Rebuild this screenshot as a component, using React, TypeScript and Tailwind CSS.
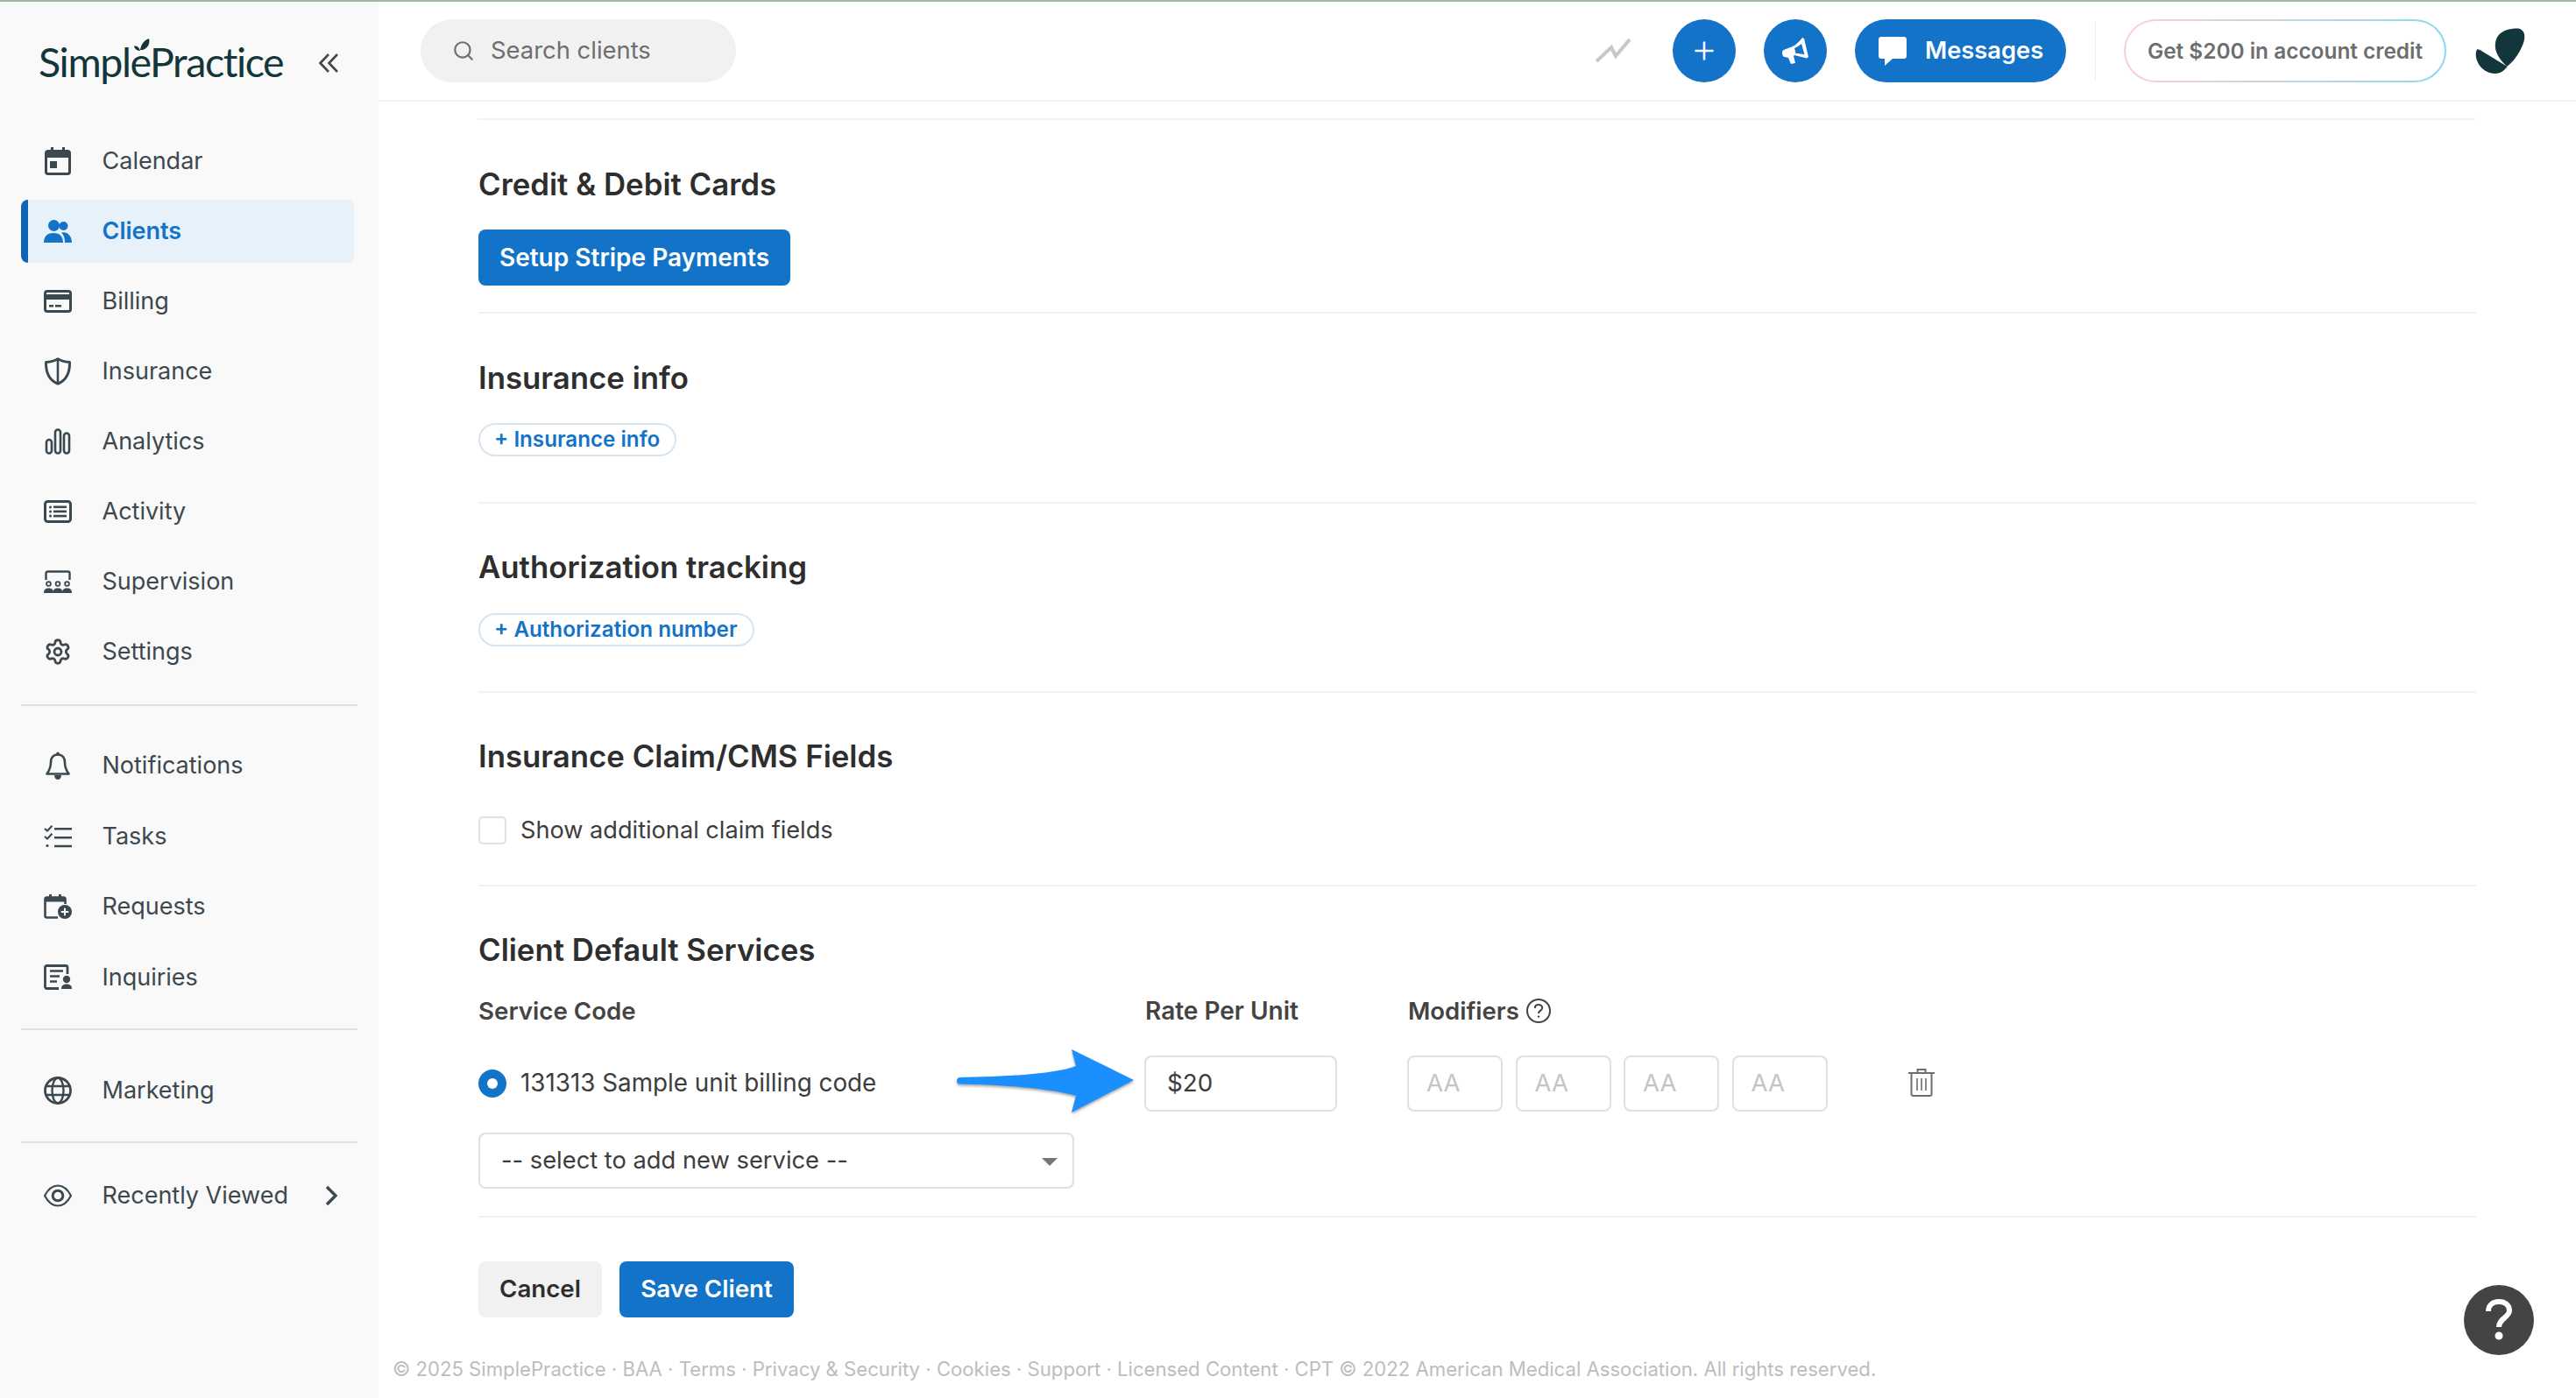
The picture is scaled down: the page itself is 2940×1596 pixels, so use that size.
import React from "react";
import { Settings, Search } from "lucide-react";

const Ink = "#3c4850";

function CalendarIco() {
  return (
    <svg width="32" height="32" viewBox="0 0 32 32" fill="none">
      <rect x="2.5" y="4.5" width="27" height="26" rx="2.5" stroke="currentColor" strokeWidth="3" />
      <rect x="2" y="4" width="28" height="8" fill="currentColor" />
      <rect x="8" y="0" width="3" height="6" fill="currentColor" />
      <rect x="21" y="0" width="3" height="6" fill="currentColor" />
      <rect x="7" y="16" width="8" height="8" fill="currentColor" />
    </svg>
  );
}
function ClientsIco() {
  return (
    <svg width="32" height="26" viewBox="0 0 32 26" fill="currentColor">
      <circle cx="11.5" cy="6.5" r="6.5" />
      <circle cx="22.5" cy="7" r="5" />
      <path d="M0 26C0 18 5 15 11 15C17 15 22 18 22 26Z" />
      <path d="M20 14.5C26.5 13 32 18 32 26H24C24 21 23 17.5 20 14.5Z" />
    </svg>
  );
}
function BillingIco() {
  return (
    <svg width="32" height="26" viewBox="0 0 32 26" fill="none">
      <rect x="1.5" y="1.5" width="29" height="23" rx="2.5" stroke="currentColor" strokeWidth="3" />
      <rect x="1" y="5" width="30" height="6" fill="currentColor" />
      <rect x="6" y="17" width="5" height="2.5" fill="currentColor" />
      <rect x="13" y="17" width="7" height="2.5" fill="currentColor" />
    </svg>
  );
}
function ShieldIco() {
  return (
    <svg width="32" height="32" viewBox="0 0 32 32" fill="none" stroke="currentColor" strokeWidth="3">
      <path d="M16 1.8C20 4.2 25 5.4 29.5 5.6C29.8 17 26 26 16 30.2C6 26 2.2 17 2.5 5.6C7 5.4 12 4.2 16 1.8Z" strokeLinejoin="round" />
      <path d="M16 2V30" strokeWidth="2.6" />
    </svg>
  );
}
function AnalyticsIco() {
  return (
    <svg width="30" height="30" viewBox="0 0 30 30" fill="none" stroke="currentColor" strokeWidth="2.6">
      <rect x="2" y="13" width="6" height="15.5" rx="3" />
      <rect x="12" y="1.5" width="6" height="27" rx="3" />
      <rect x="22" y="5.5" width="6" height="23" rx="3" />
    </svg>
  );
}
function ActivityIco() {
  return (
    <svg width="32" height="26" viewBox="0 0 32 26" fill="none">
      <rect x="1.5" y="1.5" width="29" height="23" rx="3" stroke="currentColor" strokeWidth="3" />
      <g fill="currentColor">
        <rect x="6" y="6.5" width="3" height="3" rx="1.5" />
        <rect x="6" y="11.5" width="3" height="3" rx="1.5" />
        <rect x="6" y="16.5" width="3" height="3" rx="1.5" />
        <rect x="11" y="6.5" width="15" height="2.6" />
        <rect x="11" y="11.6" width="15" height="2.6" />
        <rect x="11" y="16.8" width="15" height="2.6" />
      </g>
    </svg>
  );
}
function SupervisionIco() {
  return (
    <svg width="32" height="26" viewBox="0 0 32 26" fill="none">
      <path d="M2.5 11V3.5C2.5 2.4 3.4 1.5 4.5 1.5H27.5C28.6 1.5 29.5 2.4 29.5 3.5V11" stroke="currentColor" strokeWidth="2.4" />
      <g fill="none" stroke="currentColor" strokeWidth="1.8">
        <circle cx="5.5" cy="15.5" r="2.4" />
        <circle cx="16" cy="15.5" r="2.4" />
        <circle cx="26.5" cy="15.5" r="2.4" />
      </g>
      <g fill="currentColor">
        <path d="M0 26C0 22 2 20.4 5.5 20.4C9 20.4 11 22 11 26Z" />
        <path d="M10.5 26C10.5 22 12.5 20.4 16 20.4C19.5 20.4 21.5 22 21.5 26Z" />
        <path d="M21 26C21 22 23 20.4 26.5 20.4C30 20.4 32 22 32 26Z" />
      </g>
    </svg>
  );
}
function BellIco() {
  return (
    <svg width="28" height="32" viewBox="0 0 28 32" fill="none">
      <path d="M14 3.5C8 3.5 6 8 6 12.5C6 18.5 4 22 1.5 25.5H26.5C24 22 22 18.5 22 12.5C22 8 20 3.5 14 3.5Z" stroke="currentColor" strokeWidth="2.6" strokeLinejoin="round" />
      <circle cx="14" cy="2.4" r="1.8" fill="currentColor" />
      <path d="M10 27H18C18 30 16 32 14 32C12 32 10 30 10 27Z" fill="currentColor" />
    </svg>
  );
}
function TasksIco() {
  return (
    <svg width="32" height="26" viewBox="0 0 32 26" fill="none" stroke="currentColor">
      <path d="M1 4L4 6.5L9.5 0.8" strokeWidth="2.2" />
      <path d="M1 13L4 15.5L9.5 9.8" strokeWidth="2.2" />
      <circle cx="4" cy="23.5" r="1.6" fill="currentColor" stroke="none" />
      <path d="M12 4.3H32M12 14.3H32M12 24H32" strokeWidth="2.6" />
    </svg>
  );
}
function RequestsIco() {
  return (
    <svg width="32" height="28" viewBox="0 0 32 28" fill="none">
      <path d="M16 26.5H3.5C2.4 26.5 1.5 25.6 1.5 24.5V5.5C1.5 4.4 2.4 3.5 3.5 3.5H22.5C23.6 3.5 24.5 4.4 24.5 5.5V11" stroke="currentColor" strokeWidth="2.6" />
      <rect x="1" y="3.5" width="24" height="5" fill="currentColor" />
      <rect x="6" y="0" width="3" height="5" fill="currentColor" />
      <rect x="17" y="0" width="3" height="5" fill="currentColor" />
      <circle cx="24" cy="20" r="8" fill="currentColor" />
      <path d="M24 15.8V24.2M19.8 20H28.2" stroke="#f9f9f9" strokeWidth="2" />
    </svg>
  );
}
function InquiriesIco() {
  return (
    <svg width="32" height="30" viewBox="0 0 32 30" fill="none">
      <path d="M17 27.5H3.5C2.4 27.5 1.5 26.6 1.5 25.5V3.5C1.5 2.4 2.4 1.5 3.5 1.5H25C26.1 1.5 27 2.4 27 3.5V11" stroke="currentColor" strokeWidth="2.8" />
      <path d="M7 7.5H22M7 13.5H18M7 19.5H15" stroke="currentColor" strokeWidth="2.6" />
      <circle cx="26" cy="17" r="4.2" fill="currentColor" />
      <path d="M20 28C20 24 22.5 22.6 26 22.6C29.5 22.6 32 24 32 28Z" fill="currentColor" />
    </svg>
  );
}
function GlobeIco() {
  return (
    <svg width="32" height="32" viewBox="0 0 32 32" fill="none" stroke="currentColor" strokeWidth="2.4">
      <circle cx="16" cy="16" r="14.5" strokeWidth="2.8" />
      <ellipse cx="16" cy="16" rx="6.5" ry="14.5" />
      <path d="M2.5 11H29.5M2.5 21H29.5" />
    </svg>
  );
}
function EyeIco() {
  return (
    <svg width="32" height="26" viewBox="0 0 32 26" fill="none" stroke="currentColor">
      <path d="M1 13C5 5.5 10 1.5 16 1.5C22 1.5 27 5.5 31 13C27 20.5 22 24.5 16 24.5C10 24.5 5 20.5 1 13Z" strokeWidth="2.2" strokeLinejoin="round" />
      <circle cx="16" cy="13" r="5.8" strokeWidth="3" />
    </svg>
  );
}

const groupA = [
  { label: "Calendar", icon: <CalendarIco /> },
  { label: "Clients", icon: <ClientsIco />, active: true },
  { label: "Billing", icon: <BillingIco /> },
  { label: "Insurance", icon: <ShieldIco /> },
  { label: "Analytics", icon: <AnalyticsIco /> },
  { label: "Activity", icon: <ActivityIco /> },
  { label: "Supervision", icon: <SupervisionIco /> },
  { label: "Settings", icon: <Settings size={36} strokeWidth={2.1} /> },
];
const groupB = [
  { label: "Notifications", icon: <BellIco /> },
  { label: "Tasks", icon: <TasksIco /> },
  { label: "Requests", icon: <RequestsIco /> },
  { label: "Inquiries", icon: <InquiriesIco /> },
];

function NavItem({ label, icon, active }: { label: string; icon: React.ReactNode; active?: boolean }) {
  return (
    <div
      className={
        active
          ? "flex h-[72px] w-[380px] items-center rounded-lg border-l-8 border-[#1064b4] bg-[#e7f1fa] pl-[18px] text-[#1373c9]"
          : "flex h-[72px] w-[380px] items-center rounded-lg pl-[26px] text-[#3c4850]"
      }
    >
      <span className="flex w-[32px] items-center justify-center">{icon}</span>
      <span className={active ? "ml-[34.5px] mt-[1px] text-[27px] font-semibold" : "ml-[34.5px] mt-[1px] text-[27px]"}>{label}</span>
    </div>
  );
}

function Sidebar() {
  return (
    <aside className="flex w-[432px] shrink-0 flex-col bg-[#f9f9f9] pl-[24px] pr-[24px]">
      <div className="flex h-[146px] items-start justify-between pr-[21px] pt-[42px]">
        <div className="relative ml-[20px] font-[Lato,sans-serif] text-[46.5px] leading-[52px] tracking-[-1.4px] text-[#12363a]">
          SimplePractice
          <svg className="absolute left-[108px] top-[-1px]" width="20" height="20" viewBox="0 0 20 20" fill="#12363a">
            <path d="M8 14C9 8 12 3 18 1C19.5 6 17 12 11 14Z" />
            <path d="M8 15C4 15 1.5 12.5 1 9.5C4.5 9 7 11 8 15Z" />
          </svg>
        </div>
        <svg className="mt-[16px]" width="24" height="24" viewBox="0 0 24 24" fill="none" stroke="#4a4545" strokeWidth="2.6">
          <path d="M12 2L2.5 12L12 22M22 2L12.5 12L22 22" />
        </svg>
      </div>
      <nav className="flex flex-col gap-2">
        {groupA.map((i) => (
          <NavItem key={i.label} {...i} />
        ))}
      </nav>
      <div className="mt-[24px] h-[2px] w-[384px] bg-[#e0e0e0]" />
      <div className="mt-[32px] flex flex-col gap-[8.6px]">
        {groupB.map((i) => (
          <NavItem key={i.label} {...i} />
        ))}
      </div>
      <div className="mt-[22px] h-[2px] w-[384px] bg-[#e0e0e0]" />
      <div className="mt-[33px]">
        <NavItem label="Marketing" icon={<GlobeIco />} />
      </div>
      <div className="mt-[22px] h-[2px] w-[384px] bg-[#e0e0e0]" />
      <div className="relative mt-[24px]">
        <NavItem label="Recently Viewed" icon={<EyeIco />} />
        <svg className="absolute left-[346px] top-[24px]" width="16" height="24" viewBox="0 0 16 24" fill="none" stroke={Ink} strokeWidth="3.4">
          <path d="M3 2L13 12L3 22" />
        </svg>
      </div>
    </aside>
  );
}

function Header() {
  return (
    <header className="flex h-[114px] shrink-0 items-center border-b-2 border-[#f2f2f2] pl-[48px] pr-[57px]">
      <div className="flex h-[72px] w-[360px] items-center rounded-full bg-[#f1f1f1] pl-[36px] text-[#6e6e6e]">
        <Search size={26} strokeWidth={2} color="#6e6e6e" />
        <span className="ml-[18px] text-[27.4px]">Search clients</span>
      </div>
      <div className="ml-auto flex items-center">
        <svg width="40" height="28" viewBox="0 0 40 28" fill="none" stroke="#c8c8c8" strokeWidth="4">
          <path d="M1 26L18 10L23 20L39 1" />
        </svg>
        <div className="ml-[48px] flex h-[72px] w-[72px] items-center justify-center rounded-full bg-[#1373c9]">
          <svg width="24" height="24" viewBox="0 0 24 24" stroke="#fff" strokeWidth="2.6">
            <path d="M12 1.5V22.5M1.5 12H22.5" />
          </svg>
        </div>
        <div className="ml-[32px] flex h-[72px] w-[72px] items-center justify-center rounded-full bg-[#1373c9]">
          <svg width="30" height="30" viewBox="0 0 30 30" fill="#fff">
            <path
              fillRule="evenodd"
              d="M23 0L25 1L30 22L28 23.5L14 20L13 21L15 29L10 30L7 23L3 22C1 22 0 20 0 17C0 15 1 14 3 13.5L12 10C16 8 20 4 23 0ZM22 7C19 9.5 16 11.5 14 12L15.5 18C19 18 23 18.5 25.5 19.5Z"
            />
          </svg>
        </div>
        <div className="ml-[32px] flex h-[72px] w-[241px] items-center rounded-full bg-[#1373c9] pl-[27px] text-white">
          <svg width="32" height="33" viewBox="0 0 32 33" fill="#fff">
            <path d="M3 0H29C30.7 0 32 1.3 32 3V22C32 23.7 30.7 25 29 25H16L7 33V25H3C1.3 25 0 23.7 0 22V3C0 1.3 1.3 0 3 0Z" />
          </svg>
          <span className="ml-[21px] text-[27.3px] font-semibold">Messages</span>
        </div>
        <div className="ml-[33px] h-[66px] w-[1px] bg-[#ececec]" />
        <div className="ml-[32px] h-[72px] w-[368px] rounded-full bg-gradient-to-r from-[#fbcfd0] to-[#86d8f0] p-[2px]">
          <div className="flex h-full w-full items-center justify-center rounded-full bg-white text-[24.4px] font-semibold text-[#6e6e6e]">
            Get $200 in account credit
          </div>
        </div>
        <svg className="ml-[33px]" width="58" height="52" viewBox="0 0 58 52" fill="#12363a">
          <path d="M48 0.5C39 0.5 30 3 26 9C22.5 14 22 21 24 27C26 33 31 39 36 44C42 40 48 32 52 24C55 18 57 13 56 7C55 3 52 0.5 48 0.5Z" />
          <path d="M2 24.5C3.5 24 5 25 7 26L36.5 44C33 49 28 52 23 52C14 52 5 46 2 37C0.5 33 0 28 2 24.5Z" />
        </svg>
      </div>
    </header>
  );
}

function Section({ title, top, children, className }: { title: string; top: string; children: React.ReactNode; className: string }) {
  return (
    <section className={"border-b-2 border-[#f2f2f2] " + top + " " + className}>
      <h2 className="text-[34.8px] font-semibold leading-[44px] text-[#2e2e2e]">{title}</h2>
      {children}
    </section>
  );
}

function AddPill({ label }: { label: string }) {
  return (
    <div className="inline-flex h-[38px] items-center rounded-full border-2 border-[#d6e4ef] pl-[16px] pr-[17px] text-[24.2px] font-semibold text-[#1373c9]">
      + {label}
    </div>
  );
}

function AaBox() {
  return (
    <div className="flex h-[64px] w-[109px] items-center rounded-lg border-2 border-[#e0e0e0] pl-[20px] text-[27.5px] text-[#c4c4c4]">AA</div>
  );
}

function Content() {
  return (
    <div className="min-h-0 flex-1 pl-[114px] pr-[114px] pt-[19px]">
      <div className="h-[2px] bg-[#f2f2f2]" />
      <Section title="Credit & Debit Cards" top="pt-[51px]" className="pb-[30px]">
        <div className="mt-[30px] flex h-[64px] w-[356px] items-center justify-center rounded-lg bg-[#1373c9] text-[28px] font-semibold text-white">
          Setup Stripe Payments
        </div>
      </Section>
      <Section title="Insurance info" top="pt-[51px]" className="pb-[52px]">
        <div className="mt-[30px] flex">
          <AddPill label="Insurance info" />
        </div>
      </Section>
      <Section title="Authorization tracking" top="pt-[50px]" className="pb-[51px]">
        <div className="mt-[31px] flex">
          <AddPill label="Authorization number" />
        </div>
      </Section>
      <Section title="Insurance Claim/CMS Fields" top="pt-[50px]" className="pb-[46px]">
        <div className="mt-[47px] flex items-center">
          <div className="h-[32px] w-[32px] rounded-[5px] border-2 border-[#e0e0e0]" />
          <span className="ml-[16px] text-[27.15px] leading-[32px] text-[#3d3d3d]">Show additional claim fields</span>
        </div>
      </Section>
      <Section title="Client Default Services" top="pt-[50px]" className="relative pb-[31px]">
        <div className="mt-[30px] flex text-[27.7px] font-semibold leading-[36px] text-[#444444]">
          <div className="w-[761px]">Service Code</div>
          <div className="w-[300px] text-[28px]">Rate Per Unit</div>
          <div className="flex items-center text-[27.5px]">
            Modifiers
            <svg className="ml-[8px]" width="28" height="28" viewBox="0 0 28 28" fill="none" stroke="#444" strokeWidth="2">
              <circle cx="14" cy="14" r="13" />
              <path d="M9.8 11C9.8 8.6 11.6 7 14 7C16.4 7 18.2 8.6 18.2 10.8C18.2 13.6 14 13.8 14 17" />
              <circle cx="14" cy="20.6" r="1.2" fill="#444" stroke="none" />
            </svg>
          </div>
        </div>
        <div className="relative mt-[33px] flex items-center">
          <div className="flex w-[760px] items-center">
            <div className="flex h-[32px] w-[32px] items-center justify-center rounded-full bg-[#1373c9]">
              <div className="h-[12px] w-[12px] rounded-full bg-white" />
            </div>
            <span className="ml-[16px] text-[27.8px] text-[#3d3d3d]">131313 Sample unit billing code</span>
          </div>
          <div className="flex h-[64px] w-[220px] items-center rounded-lg border-2 border-[#e0e0e0] pl-[24px] text-[27.7px] text-[#3d3d3d]">$20</div>
          <div className="ml-[80px] flex gap-[14.5px]">
            <AaBox />
            <AaBox />
            <AaBox />
            <AaBox />
          </div>
          <svg className="-mt-[3px] ml-[92px]" width="30" height="32" viewBox="0 0 30 32" fill="none" stroke="#6e6e6e" strokeWidth="2">
            <path d="M0 5H30" />
            <path d="M10.5 5V1H19.5V5" />
            <path d="M3.5 5V29C3.5 30 4.5 31 5.5 31H24.5C25.5 31 26.5 30 26.5 29V5" />
            <path d="M10 11V25M15 11V25M20 11V25" strokeWidth="1.6" />
          </svg>
          <svg className="absolute left-[546px] top-[-7px]" width="204" height="76" viewBox="0 0 204 76" style={{ filter: "drop-shadow(0 2px 1.5px rgba(0,0,0,.35))" }}>
            <path d="M3 32C50 31 110 29 136 19L131 0L202 35L131 72L136 53C110 45 50 40 3 39.5C-1 39 -1 33 3 32Z" fill="#1c8fff" />
          </svg>
        </div>
        <div className="relative mt-[24px] flex h-[64px] w-[680px] items-center rounded-lg border-2 border-[#e0e0e0] pl-[24px] text-[27.3px] text-[#3d3d3d]">
          -- select to add new service --
          <div className="absolute right-[17px] top-[27px] h-0 w-0 border-x-[9px] border-t-[9px] border-x-transparent border-t-[#757575]" />
        </div>
      </Section>
      <div className="mt-[50px] flex gap-[20px]">
        <div className="flex h-[64px] w-[141px] items-center justify-center rounded-lg bg-[#f1f1f1] text-[27.7px] font-semibold text-[#2e2e2e]">Cancel</div>
        <div className="flex h-[64px] w-[199px] items-center justify-center rounded-lg bg-[#1373c9] text-[27.7px] font-semibold text-white">Save Client</div>
      </div>
    </div>
  );
}

export default function App() {
  return (
    <div className="relative flex h-[1596px] w-[2940px] flex-col overflow-hidden bg-white font-[Inter,sans-serif]">
      <div className="h-[2px] shrink-0 bg-[#a3b8a0]" />
      <div className="flex min-h-0 flex-1">
        <Sidebar />
        <main className="flex min-w-0 flex-1 flex-col">
          <Header />
          <Content />
          <footer className="pb-[19px] pl-[16px] text-[22.15px] leading-[28px] text-[#bdbdbd]">
            © 2025 SimplePractice · BAA · Terms · Privacy &amp; Security · Cookies · Support · Licensed Content · CPT © 2022 American Medical Association. All rights reserved.
          </footer>
        </main>
      </div>
      <div className="absolute left-[2812px] top-[1467px] flex h-[80px] w-[80px] items-center justify-center rounded-full bg-[#444444]">
        <svg width="30" height="48" viewBox="0 0 30 48" fill="none" stroke="#fff" strokeWidth="6">
          <path d="M3 14C3 7 8 3 15 3C22 3 27 7 27 13C27 21 15 22 15 32" />
          <circle cx="15" cy="42" r="4.5" fill="#fff" stroke="none" />
        </svg>
      </div>
    </div>
  );
}
